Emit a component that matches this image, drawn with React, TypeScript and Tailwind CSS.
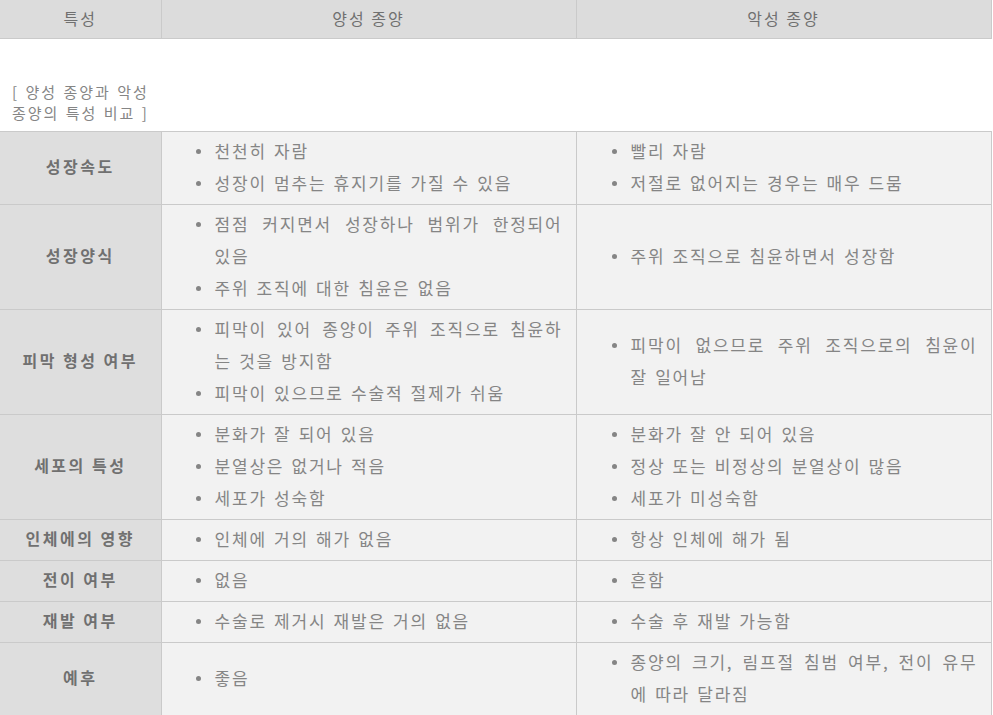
import React from "react";

type Item = string[];
type Row = { label: string; a: Item[]; b: Item[] };

const rows: Row[] = [
  { label: "성장속도", a: [["천천히 자람"], ["성장이 멈추는 휴지기를 가질 수 있음"]], b: [["빨리 자람"], ["저절로 없어지는 경우는 매우 드뭄"]] },
  { label: "성장양식", a: [["점점 커지면서 성장하나 범위가 한정되어", "있음"], ["주위 조직에 대한 침윤은 없음"]], b: [["주위 조직으로 침윤하면서 성장함"]] },
  { label: "피막 형성 여부", a: [["피막이 있어 종양이 주위 조직으로 침윤하", "는 것을 방지함"], ["피막이 있으므로 수술적 절제가 쉬움"]], b: [["피막이 없으므로 주위 조직으로의 침윤이", "잘 일어남"]] },
  { label: "세포의 특성", a: [["분화가 잘 되어 있음"], ["분열상은 없거나 적음"], ["세포가 성숙함"]], b: [["분화가 잘 안 되어 있음"], ["정상 또는 비정상의 분열상이 많음"], ["세포가 미성숙함"]] },
  { label: "인체에의 영향", a: [["인체에 거의 해가 없음"]], b: [["항상 인체에 해가 됨"]] },
  { label: "전이 여부", a: [["없음"]], b: [["흔함"]] },
  { label: "재발 여부", a: [["수술로 제거시 재발은 거의 없음"]], b: [["수술 후 재발 가능함"]] },
  { label: "예후", a: [["좋음"]], b: [["종양의 크기, 림프절 침범 여부, 전이 유무", "에 따라 달라짐"]] },
];

function List({ items }: { items: Item[] }) {
  return (
    <ul className="flex flex-col">
      {items.map((lines, i) => (
        <li key={i} className="flex">
          <span className="flex h-[32px] w-[19px] shrink-0 items-center pt-[2px]">
            <span className="block h-[5px] w-[5px] rounded-full bg-[#858585]" />
          </span>
          <span className="flex-1">
            {lines.map((l, j) =>
              j < lines.length - 1 ? (
                <span key={j} className="block text-justify [text-align-last:justify]">
                  {l}
                </span>
              ) : (
                <span key={j} className="block whitespace-nowrap">
                  {l}
                </span>
              )
            )}
          </span>
        </li>
      ))}
    </ul>
  );
}

export default function App() {
  return (
    <div
      className="w-[993px] bg-white text-[#858585]"
      style={{ fontFamily: '"Noto Sans CJK KR", "Noto Sans", sans-serif' }}
    >
      <table className="w-[991px] table-fixed border-collapse">
        <colgroup>
          <col className="w-[161px]" />
          <col className="w-[415px]" />
          <col className="w-[415px]" />
        </colgroup>
        <thead>
          <tr className="h-[38px] bg-[#dcdcdc] text-[16px] tracking-[2px] text-[#707070]">
            <th className="border border-[#cacaca] border-t-0 border-l-0 pb-[2px] font-normal">특성</th>
            <th className="border border-[#cacaca] border-t-0 pb-[2px] font-normal">양성 종양</th>
            <th className="border border-[#cacaca] border-t-0 pb-[2px] font-normal">악성 종양</th>
          </tr>
        </thead>
      </table>
      <div className="flex h-[92px] w-[160px] flex-col justify-end pb-[8px] pl-[12px] text-[15px] leading-[21px] tracking-[2px] text-[#858585] [word-spacing:1px]">
        <span>[ 양성 종양과 악성</span>
        <span>종양의 특성 비교 ]</span>
      </div>
      <table className="w-[991px] table-fixed border-collapse">
        <colgroup>
          <col className="w-[161px]" />
          <col className="w-[415px]" />
          <col className="w-[415px]" />
        </colgroup>
        <tbody>
          {rows.map((r) => (
            <tr key={r.label}>
              <td className="border border-l-0 border-[#cacaca] bg-[#dedede] pb-[3px] text-center text-[16px] font-semibold tracking-[2.5px] text-[#707070]">
                {r.label}
              </td>
              <td className="border border-[#cacaca] bg-[#f2f2f2] pt-[3px] pb-[5px] pl-[34px] pr-[13px] text-[17px] leading-[32px] tracking-[1.8px] [word-spacing:1.6px]">
                <List items={r.a} />
              </td>
              <td className="border border-[#cacaca] bg-[#f2f2f2] pt-[3px] pb-[5px] pl-[35px] pr-[13px] text-[17px] leading-[32px] tracking-[1.8px] [word-spacing:1.6px]">
                <List items={r.b} />
              </td>
            </tr>
          ))}
        </tbody>
      </table>
    </div>
  );
}
